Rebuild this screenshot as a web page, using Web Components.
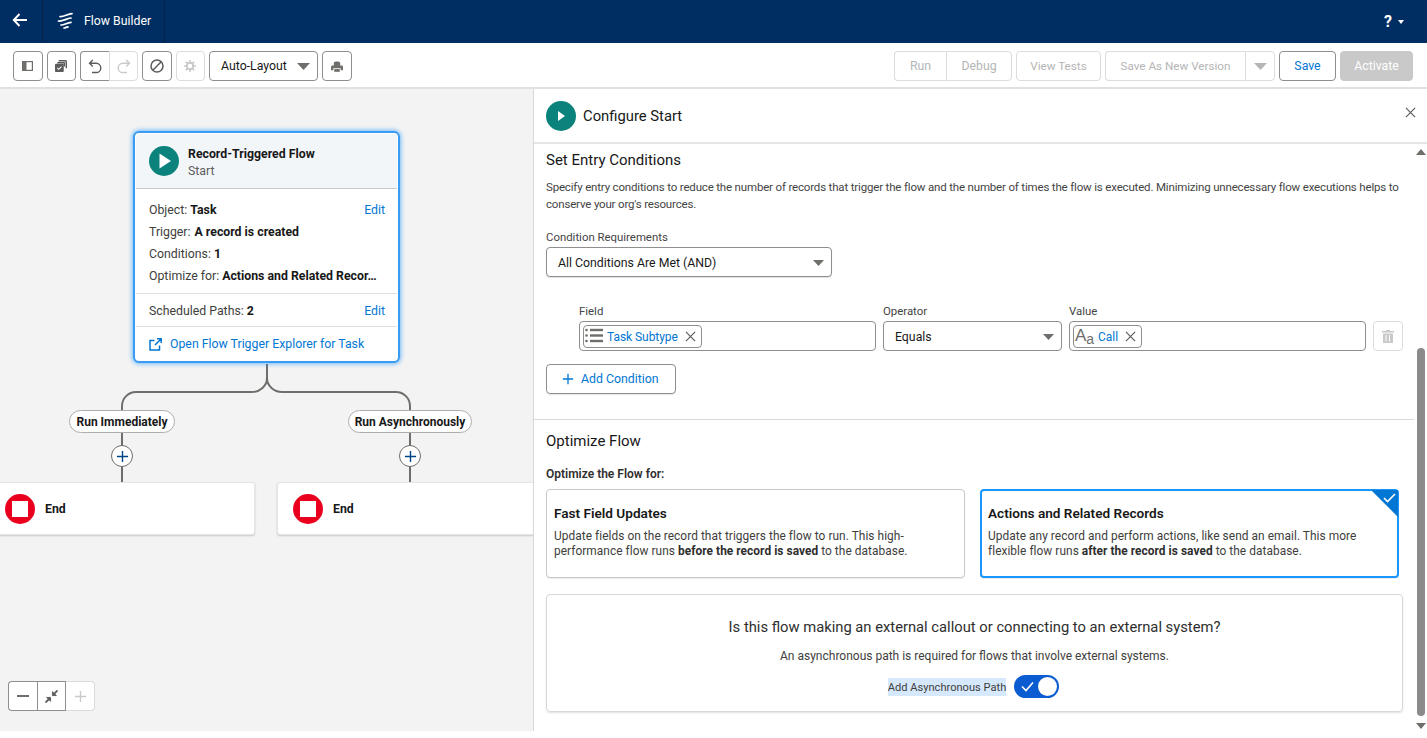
<!DOCTYPE html>
<html>
<head>
<meta charset="utf-8">
<title>Flow Builder</title>
<style>
  html, body { margin: 0; height: 100%; background: #fff; }
  body { font-family: Roboto, "Noto Sans", sans-serif; font-size: 12.3px; color: #181818; overflow: hidden; }
  fb-app { display: block; }
</style>
</head>
<body>
<fb-app></fb-app>

<script>
const icons = {
  back: `<svg width="16" height="14" viewBox="0 0 16 14" fill="none" stroke="#fff" stroke-width="2"><path d="M15 7H2M7.5 1 1.8 7l5.7 6"/></svg>`,
  flow: `<svg width="17" height="17" viewBox="0 0 17 17" fill="none" stroke="#fff" stroke-width="1.7" stroke-linecap="round"><path d="M3 4.500C7 5 10 2 15 1.600M1.500 9C6 9.600 9 6.500 14 6M4 13C7.500 13 10 10.800 14 10.400M7 16c1.500 0 2.500-1 4-1.200"/></svg>`,
  panel: `<svg width="11" height="10" viewBox="0 0 11 10"><rect x=".6" y=".6" width="9.800" height="8.800" fill="#fff" stroke="#706e6b" stroke-width="1.200"/><rect x="1" y="1" width="3.500" height="8" fill="#706e6b"/></svg>`,
  copy: `<svg width="12" height="12" viewBox="0 0 13 13"><path d="M4 0h7.500A1.500 1.500 0 0 1 13 1.500V9h-1.500V1.500H4z" fill="#5c5c5c"/><path d="M2.500 2.200h7.300A1.200 1.200 0 0 1 11 3.400V7H9.500V3.700H2.500z" fill="#5c5c5c"/><rect y="4" width="9.500" height="9" rx="1" fill="#5c5c5c"/><path d="m2.500 8.600 1.500 1.500 3-3" fill="none" stroke="#fff" stroke-width="1.100"/></svg>`,
  undo: `<svg width="14" height="15" viewBox="0 0 14 15" fill="none" stroke="#5c5c5c" stroke-width="1.400"><path d="M4.800 1 1.500 4.300l3.300 3.300M1.800 4.300h6.400a4.600 4.600 0 0 1 0 9.200H4"/></svg>`,
  redo: `<svg width="14" height="15" viewBox="0 0 14 15" fill="none" stroke="#c9c9c9" stroke-width="1.400"><path d="M9.200 1l3.300 3.300-3.300 3.300M12.200 4.300H5.800a4.600 4.600 0 0 0 0 9.200H10"/></svg>`,
  ban: `<svg width="14" height="14" viewBox="0 0 14 14" fill="none" stroke="#5c5c5c" stroke-width="1.500"><circle cx="7" cy="7" r="6"/><path d="M11.200 2.800 2.800 11.200"/></svg>`,
  gear: `<svg width="12" height="12" viewBox="0 0 13 13"><circle cx="6.500" cy="6.500" r="3.500" fill="none" stroke="#c9c9c9" stroke-width="2"/><path d="M6.500 0v3M6.500 10v3M0 6.500h3M10 6.500h3M1.900 1.900 4 4M9 9l2.100 2.100M11.100 1.900 9 4M4 9l-2.100 2.100" stroke="#c9c9c9" stroke-width="1.800"/></svg>`,
  print: `<svg width="12" height="11" viewBox="0 0 13 12"><path d="M3 5V2.500C3 1 4.200.5 6.500.5S10 1 10 2.500V5h1.500A1.500 1.500 0 0 1 13 6.500V10h-2.500V8h-8v2H0V6.500A1.500 1.500 0 0 1 1.500 5z" fill="#706e6b"/><rect x="3.500" y="8.800" width="6" height="3" fill="#706e6b"/></svg>`,
  x: (s, c) => `<svg width="${s}" height="${s}" viewBox="0 0 12 12" fill="none" stroke="${c}" stroke-width="1.300"><path d="M1 1l10 10M11 1 1 11"/></svg>`,
  caret: (c, w = 13, h = 7) => `<svg width="${w}" height="${h}" viewBox="0 0 13 7" preserveAspectRatio="none"><path d="M0 0h13L6.500 7z" fill="${c}"/></svg>`,
  play: (s, d = 'M10.500 7.500 22 15l-11.500 7.500z') => `<svg width="${s}" height="${s}" viewBox="0 0 30 30"><circle cx="15" cy="15" r="15" fill="#0b827c"/><path d="${d}" fill="#fff"/></svg>`,
  stop: `<svg width="30" height="30" viewBox="0 0 30 30"><circle cx="15" cy="15" r="15" fill="#ea001e"/><rect x="7" y="7" width="16" height="16" fill="#fff"/></svg>`,
  plus: (s, c) => `<svg width="${s}" height="${s}" viewBox="0 0 14 14" fill="none" stroke="${c}" stroke-width="1.500"><path d="M7 1v12M1 7h12"/></svg>`,
  ext: `<svg width="13" height="13" viewBox="0 0 13 13" fill="none" stroke="#0176d3" stroke-width="1.500"><path d="M5.500 2.500H1v9.500h9.500V7.500M6 7l6-6M8 .8h4.200V5"/></svg>`,
  list: `<svg width="18" height="15" viewBox="0 0 18 15" fill="#706e6b"><circle cx="1.500" cy="2" r="1.300"/><circle cx="1.500" cy="7.500" r="1.300"/><circle cx="1.500" cy="13" r="1.300"/><rect x="5" y=".8" width="13" height="2.400"/><rect x="5" y="6.300" width="13" height="2.400"/><rect x="5" y="11.800" width="13" height="2.400"/></svg>`,
  trash: `<svg width="12" height="13" viewBox="0 0 12 13" fill="#c9c9c9"><path d="M4 0h4v1h4v1.500H0V1h4z"/><path d="M1 3.500h10V13H1zM3.500 5v6.500h1V5zm3.500 0v6.500h1V5z" fill-rule="evenodd"/></svg>`,
  shrink: `<svg width="13" height="13" viewBox="0 0 14 14" fill="#5c5c5c" stroke="#5c5c5c" stroke-width="1"><path d="M8 6V1.800L12.200 6z"/><path d="M6 8v4.200L1.800 8z"/><path d="m10 4 3.500-3.500M4 10 .5 13.500" stroke-width="2"/></svg>`,
};

// buttons of both bars
class FbBtn extends HTMLElement {
  constructor() {
    super();
    this.attachShadow({ mode: 'open' });
    this.shadowRoot.innerHTML = `
      <style>
      :host { display: inline-flex; align-items: center; justify-content: center; box-sizing: border-box; height: 30px; background: #fff;
        border: 1px solid #8e8e8e; border-radius: 4px; font-size: 12.3px; color: #181818; white-space: nowrap; }
      :host([off]) { border-color: #dcdcdc; color: #b5b5b5; }
      :host([pos=left]) { border-radius: 4px 0 0 4px; border-right-width: 0; }
      :host([pos=right]) { border-radius: 0 4px 4px 0; }
      :host([brand]) { color: #0176d3; }
      :host([solid]) { background: #c9c9c9; border-color: #c9c9c9; color: #fff; }
      </style>
      <slot></slot>
    `;
  }
}
customElements.define('fb-btn', FbBtn);

class FbHeader extends HTMLElement {
  constructor() {
    super();
    this.attachShadow({ mode: 'open' });
    this.shadowRoot.innerHTML = `
      <style>
      :host { display: flex; align-items: center; height: 43px; background: #012e62; color: #fff; }
      .back { width: 43px; height: 100%; display: flex; align-items: center; box-sizing: border-box; justify-content: center; border-right: 1px solid #0a2344; padding: 0 3px 3px 0; }
      .app { width: 122px; height: 100%; box-sizing: border-box; display: flex; align-items: center; padding: 0 0 2px 14px; gap: 10px; border-right: 1px solid #0a2344; font-size: 12.3px; }
      .help { margin-left: auto; margin-right: 23px; display: flex; align-items: center; gap: 6px; font-size: 16px; font-weight: 700; }
      .help i { border: 3px solid transparent; border-top: 4px solid #fff; border-bottom: 0; }
      </style>
      <div class="back">${icons.back}</div>
      <div class="app">${icons.flow}<span>Flow Builder</span></div>
      <div class="help"><span>?</span><i></i></div>
    `;
  }
}
customElements.define('fb-header', FbHeader);

class FbToolbar extends HTMLElement {
  constructor() {
    super();
    this.attachShadow({ mode: 'open' });
    this.shadowRoot.innerHTML = `
      <style>
      :host { display: flex; justify-content: space-between; align-items: center; height: 46px; box-sizing: border-box; padding: 2px 14px 0 13px; background: #fff; border-bottom: 2px solid #e0e0e0; }
      .side { display: flex; gap: 4px; }
      .joined { display: flex; }
      .ico { width: 29.500px; }
      .joined .ico { width: 29px; }
      .auto { width: 109px; justify-content: space-between; padding: 0 7px 0 11px; }
      .tight { font-size: 11.700px; }
      </style>
      <div class="side">
        <fb-btn class="ico">${icons.panel}</fb-btn>
        <fb-btn class="ico">${icons.copy}</fb-btn>
        <div class="joined">
          <fb-btn class="ico" pos="left">${icons.undo}</fb-btn>
          <fb-btn class="ico" pos="right" off>${icons.redo}</fb-btn>
        </div>
        <fb-btn class="ico">${icons.ban}</fb-btn>
        <fb-btn class="ico" off>${icons.gear}</fb-btn>
        <fb-btn class="auto"><span>Auto-Layout</span>${icons.caret('#706e6b')}</fb-btn>
        <fb-btn class="ico">${icons.print}</fb-btn>
      </div>
      <div class="side">
        <div class="joined">
          <fb-btn style="width:52px" pos="left" off>Run</fb-btn>
          <fb-btn style="width:66px" pos="right" off>Debug</fb-btn>
        </div>
        <fb-btn style="width:85px" off class="tight">View Tests</fb-btn>
        <div class="joined">
          <fb-btn style="width:140px" pos="left" off class="tight">Save As New Version</fb-btn>
          <fb-btn style="width:30px" pos="right" off>${icons.caret('#b5b5b5')}</fb-btn>
        </div>
        <fb-btn style="width:57px" brand>Save</fb-btn>
        <fb-btn style="width:73px" solid>Activate</fb-btn>
      </div>
    `;
  }
}
customElements.define('fb-toolbar', FbToolbar);

// diagram nodes, their place on the canvas comes from the left/top attributes
class FlowNode extends HTMLElement {
  connectedCallback() {
    this.style.left = this.getAttribute('left') + 'px';
    this.style.top = this.getAttribute('top') + 'px';
  }
}

class FlowStart extends FlowNode {
  constructor() {
    super();
    this.attachShadow({ mode: 'open' });
    this.shadowRoot.innerHTML = `
      <style>
      :host { position: absolute; width: 267px; height: 232px; box-sizing: border-box; background: #fff; border: 2px solid #3b9bf0; border-radius: 6px;
        box-shadow: 0 0 4px 1px rgba(27,150,255,.6), inset 0 0 0 1px #fff; font-size: 12.3px; color: #3e3e3c; }
      .head { height: 55px; box-sizing: border-box; background: #f3f6f9; border-bottom: 1px solid #c9c9c9; border-radius: 4px 4px 0 0; display: flex; align-items: center; gap: 9px; padding-left: 13px; margin: 1px 1px 0; }
      .head svg { flex: none; }
      .head div div { line-height: 17px; }
      .texts { margin-top: 3px; }
      .title { font-weight: 700; color: #181818; }
      .sub { color: #5c5c5c; }
      .sec { padding: 10px 12px 6px 13px; border-bottom: 1px solid #e0e0e0; margin: 0 1px; }
      .row { height: 22px; display: flex; align-items: center; white-space: nowrap; gap: 3px; }
      .row b { color: #181818; }
      .trig { margin-left: 1px; }
      a { color: #0176d3; margin-left: auto; }
      .one { padding: 6px 12px 4px 13px; }
      .open { display: flex; align-items: center; gap: 8px; padding: 10px 14px; color: #0176d3; }
      </style>
      <div class="head">${icons.play(30)}<div class="texts"><div class="title">Record-Triggered Flow</div><div class="sub">Start</div></div></div>
      <div class="sec">
        <div class="row"><span>Object:</span><b>Task</b><a>Edit</a></div>
        <div class="row"><span>Trigger:</span><b class="trig">A record is created</b></div>
        <div class="row"><span>Conditions:</span><b>1</b></div>
        <div class="row"><span>Optimize for:</span><b>Actions and Related Recor…</b></div>
      </div>
      <div class="sec one"><div class="row"><span>Scheduled Paths:</span><b>2</b><a>Edit</a></div></div>
      <div class="open">${icons.ext}<span>Open Flow Trigger Explorer for Task</span></div>
    `;
  }
}
customElements.define('flow-start', FlowStart);

class FlowEnd extends FlowNode {
  constructor() {
    super();
    this.attachShadow({ mode: 'open' });
    this.shadowRoot.innerHTML = `
      <style>
      :host { position: absolute; width: 258px; height: 53px; box-sizing: border-box; background: #fff; border: 1px solid #e5e5e5; border-radius: 3px;
        box-shadow: 0 1px 2px rgba(0,0,0,.18); display: flex; align-items: center; gap: 10px; padding-left: 15px; font-size: 12.3px; font-weight: 700; }
      </style>
      ${icons.stop}<span>End</span>
    `;
  }
}
customElements.define('flow-end', FlowEnd);

class FlowLabel extends FlowNode {
  constructor() {
    super();
    this.attachShadow({ mode: 'open' });
    this.shadowRoot.innerHTML = `
      <style>
      :host { position: absolute; height: 23px; box-sizing: border-box; background: #fff; border: 1px solid #aeaeae; border-radius: 12px; display: flex; align-items: center; justify-content: center; font-size: 12px; font-weight: 700; white-space: nowrap; transform: translateX(-50%); }
      </style>
      <slot></slot>
    `;
  }
}
customElements.define('flow-label', FlowLabel);

class FlowAdd extends FlowNode {
  constructor() {
    super();
    this.attachShadow({ mode: 'open' });
    this.shadowRoot.innerHTML = `
      <style>
      :host { position: absolute; width: 22px; height: 22px; box-sizing: border-box; background: #fff; border: 1px solid #706e6b; border-radius: 50%; display: flex; align-items: center; justify-content: center; }
      </style>
      ${icons.plus(13, '#014486')}
    `;
  }
}
customElements.define('flow-add', FlowAdd);

class FlowZoom extends HTMLElement {
  constructor() {
    super();
    this.attachShadow({ mode: 'open' });
    this.shadowRoot.innerHTML = `
      <style>
      :host { position: absolute; left: 8px; bottom: 20px; display: flex; }
      fb-btn { width: 29px; }
      .mid { border-radius: 0; border-right-width: 1px; }
      .minus { width: 12px; height: 2px; background: #706e6b; }
      </style>
      <fb-btn pos="left"><div class="minus"></div></fb-btn>
      <fb-btn class="mid" pos="left">${icons.shrink}</fb-btn>
      <fb-btn pos="right" off style="border-left:0">${icons.plus(13, '#c9c9c9')}</fb-btn>
    `;
  }
}
customElements.define('flow-zoom', FlowZoom);

class FlowCanvas extends HTMLElement {
  constructor() {
    super();
    this.attachShadow({ mode: 'open' });
    this.shadowRoot.innerHTML = `
      <style>
      :host { display: block; position: relative; width: 533px; flex: none; height: 100%; background: #f3f3f3; overflow: hidden; }
      svg.wires { position: absolute; left: 0; top: 0; }
      </style>
      <svg class="wires" width="533" height="642" fill="none" stroke="#706e6b" stroke-width="2">
        <g transform="translate(0,-89)">
          <path d="M267 364V378C267 386 260 392 252 392H136A14 14 0 0 0 122 406V483"/>
          <path d="M267 378C267 386 274 392 282 392H396A14 14 0 0 1 410 406V483"/>
        </g>
      </svg>
      <flow-start left="133" top="42"></flow-start>
      <flow-label left="122" top="321" style="width:106px">Run Immediately</flow-label>
      <flow-label left="410" top="321" style="width:124px">Run Asynchronously</flow-label>
      <flow-add left="111" top="356"></flow-add>
      <flow-add left="399" top="356"></flow-add>
      <flow-end left="-11" top="393" style="width:266px"></flow-end>
      <flow-end left="277" top="393"></flow-end>
      <flow-zoom></flow-zoom>
    `;
  }
}
customElements.define('flow-canvas', FlowCanvas);

class CondPill extends HTMLElement {
  constructor() {
    super();
    this.attachShadow({ mode: 'open' });
    this.shadowRoot.innerHTML = `
      <style>
      :host { display: inline-flex; align-items: center; height: 23px; box-sizing: border-box; border: 1px solid #8e8e8e; border-radius: 4px; padding: 0 5px 0 1px; gap: 4px; color: #0176d3; font-size: 12px; letter-spacing: -.05px; background: #fff; }
      svg { margin-left: 3px; }
      </style>
      <slot name="icon"></slot><slot></slot>${icons.x(11, '#5c5c5c')}
    `;
  }
}
customElements.define('cond-pill', CondPill);

class CondField extends HTMLElement {
  constructor() {
    super();
    this.attachShadow({ mode: 'open' });
    this.shadowRoot.innerHTML = `
      <style>
      :host { display: block; font-size: 11.400px; color: #444; }
      .label { height: 20px; line-height: 20px; }
      .box { height: 30px; box-sizing: border-box; border: 1px solid #8e8e8e; border-radius: 4px; display: flex; align-items: center; padding: 1px 3px 0; justify-content: space-between; color: #181818; font-size: 12.3px; background: #fff; }
      :host([select]) .box { padding: 1px 7px 0 11px; }
      :host([wide]) .box { box-shadow: 0 1px 1px rgba(0,0,0,.12); }
      </style>
      <div class="label">${this.getAttribute('label')}</div>
      <div class="box"><slot></slot></div>
    `;
  }
}
customElements.define('cond-field', CondField);

class OptCard extends HTMLElement {
  constructor() {
    super();
    this.attachShadow({ mode: 'open' });
    const tick = this.hasAttribute('selected')
      ? `<svg class="tick" width="27" height="27" viewBox="0 0 27 27"><path d="M0 0h27v27z" fill="#0176d3"/><path d="m13 8 3.500 3.500L24 4" fill="none" stroke="#fff" stroke-width="1.600"/></svg>`
      : '';
    this.shadowRoot.innerHTML = `
      <style>
      :host { display: block; position: relative; box-sizing: border-box; width: 419px; height: 89px; background: #fff; border: 1px solid #c9c9c9; border-radius: 4px; padding: 13px 7px; box-shadow: 0 1px 1px rgba(0,0,0,.08); color: #3e3e3c; font-size: 11.900px; letter-spacing: .05px; line-height: 15px; }
      :host([selected]) { border: 2px solid #1b96ff; padding: 12px 6px; }
      .title { font-size: 13.600px; font-weight: 600; letter-spacing: 0; color: #181818; line-height: 20px; margin-bottom: 6px; }
      .tick { position: absolute; right: -1px; top: -1px; }
      </style>
      ${tick}
      <div class="title">${this.getAttribute('title')}</div>
      <div><slot></slot></div>
    `;
  }
}
customElements.define('opt-card', OptCard);

class FbToggle extends HTMLElement {
  constructor() {
    super();
    this.attachShadow({ mode: 'open' });
    this.shadowRoot.innerHTML = `
      <style>
      :host { display: block; position: relative; width: 45px; height: 23px; box-sizing: border-box; background: #0b5cd0; border-radius: 12px; }
      svg { position: absolute; left: 7px; top: 6px; }
      i { position: absolute; right: 2px; top: 2px; width: 19px; height: 19px; border-radius: 50%; background: #fff; }
      </style>
      <svg width="13" height="11" viewBox="0 0 13 11" fill="none" stroke="#fff" stroke-width="1.600"><path d="m1 5.500 4 4L12 1.500"/></svg><i></i>
    `;
  }
}
customElements.define('fb-toggle', FbToggle);

class FbScrollbar extends HTMLElement {
  constructor() {
    super();
    this.attachShadow({ mode: 'open' });
    this.shadowRoot.innerHTML = `
      <style>
      :host { display: flex; flex-direction: column; align-items: center; width: 13px; flex: none; padding: 5px 0 2px; box-sizing: border-box; }
      .up, .down { width: 0; height: 0; flex: none; border: 5px solid transparent; }
      .up { border-top: 0; border-bottom: 6px solid #706e6b; }
      .down { border-bottom: 0; border-top: 6px solid #706e6b; margin-top: 7px; }
      .track { flex: 1; display: flex; flex-direction: column; justify-content: flex-end; width: 8px; }
      .thumb { height: 368px; background: #8a8a8a; border-radius: 4px; }
      </style>
      <div class="up"></div>
      <div class="track"><div class="thumb"></div></div>
      <div class="down"></div>
    `;
  }
}
customElements.define('fb-scrollbar', FbScrollbar);

class ConfigPanel extends HTMLElement {
  constructor() {
    super();
    this.attachShadow({ mode: 'open' });
    const smallCaret = icons.caret('#706e6b', 11, 6);
    this.shadowRoot.innerHTML = `
      <style>
      :host { display: flex; flex-direction: column; flex: 1; min-width: 0; height: 100%; border-left: 1px solid #d8d8d8; box-sizing: border-box; background: #fff; }
      header { height: 55px; flex: none; box-sizing: border-box; display: flex; align-items: center; gap: 7px; padding-left: 12px; border-bottom: 2px solid #e5e5e5; font-size: 14.800px; position: relative; }
      header span:first-of-type { padding-top: 1px; }
      header .close { position: absolute; right: 11px; top: 18px; display: flex; }
      .wrap { flex: 1; display: flex; min-height: 0; }
      .body { flex: 1; min-width: 0; }
      .top { padding: 6px 11px 0 12px; height: 276px; box-sizing: border-box; border-bottom: 1px solid #d8d8d8; }
      h2 { font-size: 15px; font-weight: 400; margin: 0; line-height: 20px; }
      p { margin: 9px 0 0; color: #444; font-size: 11.500px; letter-spacing: -.17px; line-height: 17px; }
      .req { width: 286px; margin-top: 14px; }
      .cond { display: grid; grid-template-columns: 297px 179px 297px 30px; gap: 7px; margin: 24px 0 0 33px; align-items: end; }
      .del { width: 30px; height: 30px; box-sizing: border-box; border: 1px solid #dcdcdc; border-radius: 4px; display: flex; align-items: center; justify-content: center; }
      .add { display: flex; width: 130px; height: 30px; box-sizing: border-box; border: 1px solid #8e8e8e; border-radius: 4px; align-items: center; gap: 7px; padding-left: 15px; color: #0176d3; margin-top: 13px; box-shadow: 0 1px 1px rgba(0,0,0,.1); }
      .opt { padding: 11px 11px 0 12px; }
      .for { font-weight: 600; font-size: 12px; margin-top: 15px; line-height: 16px; color: #2e2e2e; }
      .cards { display: flex; justify-content: space-between; width: 853px; margin-top: 7px; }
      b { color: #2e2e2e; }
      .ext { margin-top: 16px; height: 118px; box-sizing: border-box; border: 1px solid #d8d8d8; border-radius: 4px; box-shadow: 0 1px 2px rgba(0,0,0,.12); display: flex; flex-direction: column; align-items: center; padding-top: 20px; color: #3e3e3c; }
      .ext .q { font-size: 14.750px; line-height: 24px; color: #2e2e2e; }
      .ext .s { font-size: 12px; line-height: 16px; margin-top: 9px; }
      .ext .t { display: flex; align-items: center; gap: 8px; margin-top: 11px; margin-left: -2px; }
      mark { background: #d6e8fb; color: inherit; font-size: 11.100px; line-height: 17px; display: block; padding-top: 1px; }
      .aa { font: 400 17px/1 "Liberation Sans", sans-serif; color: #706e6b; white-space: nowrap; display: block; margin-top: -3px; }
      .aa span { font-size: 14px; position: relative; top: 3px; }
      </style>
      <header>${icons.play(30, 'M12 10 19 15l-7 5z')}<span>Configure Start</span><span class="close">${icons.x(11, '#5c5c5c')}</span></header>
      <div class="wrap">
        <div class="body">
          <section class="top">
            <h2>Set Entry Conditions</h2>
            <p>Specify entry conditions to reduce the number of records that trigger the flow and the number of times the flow is executed. Minimizing unnecessary flow executions helps to conserve your org's resources.</p>
            <cond-field class="req" label="Condition Requirements" select wide><span>All Conditions Are Met (AND)</span>${smallCaret}</cond-field>
            <div class="cond">
              <cond-field label="Field"><cond-pill><span slot="icon">${icons.list}</span>Task Subtype</cond-pill></cond-field>
              <cond-field label="Operator" select><span>Equals</span>${smallCaret}</cond-field>
              <cond-field label="Value"><cond-pill><span slot="icon" class="aa">A<span>a</span></span>Call</cond-pill></cond-field>
              <div class="del">${icons.trash}</div>
            </div>
            <div class="add">${icons.plus(12, '#0176d3')}<span>Add Condition</span></div>
          </section>
          <section class="opt">
            <h2>Optimize Flow</h2>
            <div class="for">Optimize the Flow for:</div>
            <div class="cards">
              <opt-card title="Fast Field Updates">Update fields on the record that triggers the flow to run. This high-performance flow runs <b>before the record is saved</b> to the database.</opt-card>
              <opt-card title="Actions and Related Records" selected>Update any record and perform actions, like send an email. This more flexible flow runs <b>after the record is saved</b> to the database.</opt-card>
            </div>
            <div class="ext">
              <div class="q">Is this flow making an external callout or connecting to an external system?</div>
              <div class="s">An asynchronous path is required for flows that involve external systems.</div>
              <div class="t"><mark>Add Asynchronous Path</mark><fb-toggle></fb-toggle></div>
            </div>
          </section>
        </div>
        <fb-scrollbar></fb-scrollbar>
      </div>
    `;
  }
}
customElements.define('config-panel', ConfigPanel);

class FbApp extends HTMLElement {
  constructor() {
    super();
    this.attachShadow({ mode: 'open' });
    this.shadowRoot.innerHTML = `
      <style>
      :host { display: block; height: 731px; }
      .main { display: flex; height: 642px; }
      </style>
      <fb-header></fb-header>
      <fb-toolbar></fb-toolbar>
      <div class="main">
        <flow-canvas></flow-canvas>
        <config-panel></config-panel>
      </div>
    `;
  }
}
customElements.define('fb-app', FbApp);
</script>
</body>
</html>
